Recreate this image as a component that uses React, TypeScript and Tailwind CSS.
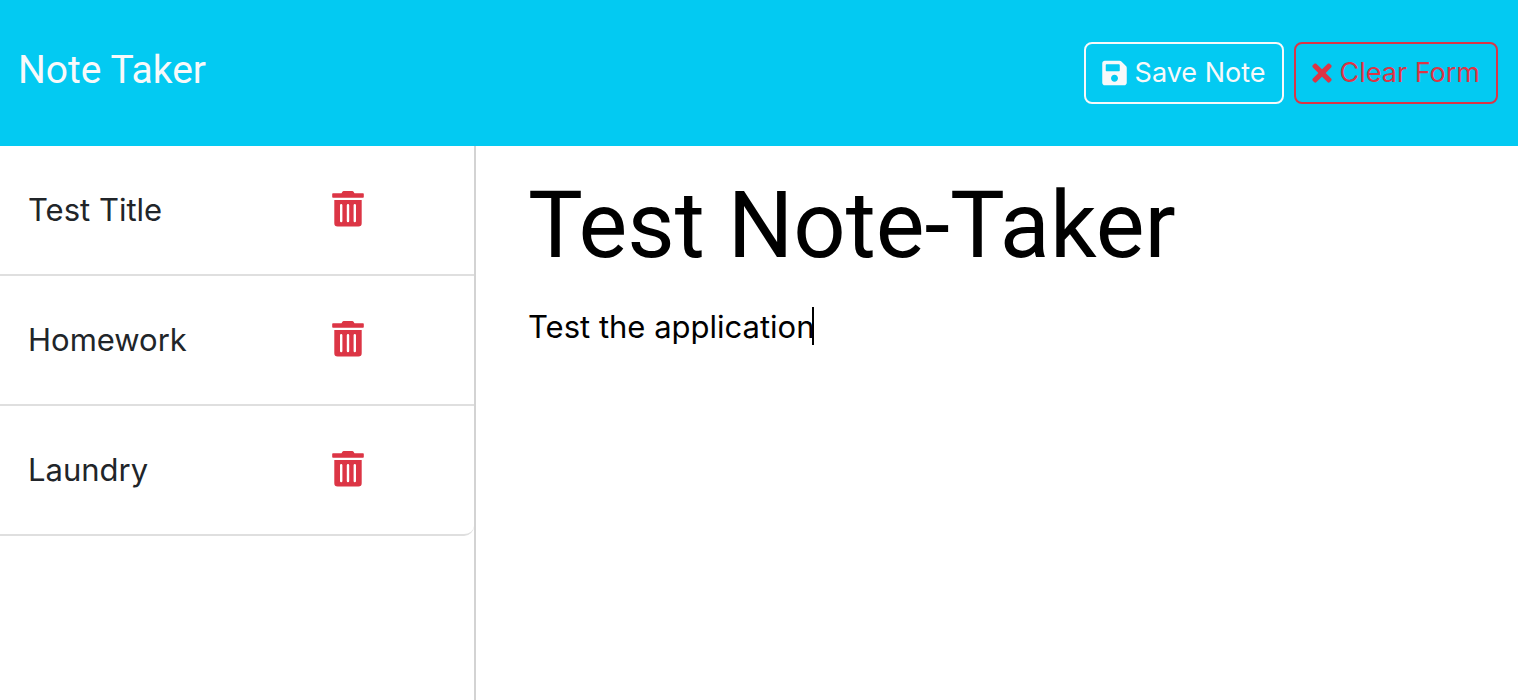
import { useState } from "react";
import { FaSave, FaTimes } from "react-icons/fa";

const notes = ["Test Title", "Homework", "Laundry"];

function TrashIcon() {
  return (
    <svg viewBox="0 0 32 36" className="h-9 w-8" fill="currentColor" aria-hidden="true">
      <path
        fillRule="evenodd"
        d="M1 2.2H9.5L10.4 0.8Q10.9 0 11.8 0H20.2Q21.1 0 21.6 0.8L22.5 2.2H31Q31.8 2.2 31.8 3V5.9Q31.8 6.7 31 6.7H1Q0.2 6.7 0.2 5.9V3Q0.2 2.2 1 2.2ZM2.3 9H29.7V32.3Q29.7 35.6 26.4 35.6H5.6Q2.3 35.6 2.3 32.3ZM9.2 13Q8 13 8 14.2V30Q8 31.2 9.2 31.2Q10.4 31.2 10.4 30V14.2Q10.4 13 9.2 13ZM16 13Q14.8 13 14.8 14.2V30Q14.8 31.2 16 31.2Q17.2 31.2 17.2 30V14.2Q17.2 13 16 13ZM22.8 13Q21.6 13 21.6 14.2V30Q21.6 31.2 22.8 31.2Q24 31.2 24 30V14.2Q24 13 22.8 13Z"
      />
    </svg>
  );
}

export default function App() {
  const [title, setTitle] = useState("Test Note-Taker");
  const [body, setBody] = useState("Test the application");
  const [showCaret, setShowCaret] = useState(true);
  return (
    <div className="flex min-h-screen flex-col bg-white font-['Inter',sans-serif] text-[#212529]">
      <nav className="flex items-center justify-between bg-[#03caf2] py-[42px] pr-5 pl-[18px]">
        <a href="#" className="pb-1.5 font-['Roboto',sans-serif] text-[39px] leading-[54px] text-[#f8f9fa]">Note Taker</a>
        <div className="flex gap-[10px] text-[27px]">
          <button type="button" className="flex h-[62px] items-center gap-2 rounded-lg border-2 border-[#f8f9fa] px-4 text-[#f8f9fa]">
            <FaSave className="h-7 w-[25px]" /> Save Note
          </button>
          <button type="button" className="flex h-[62px] items-center gap-2 rounded-lg border-2 border-[#dc3545] px-4 text-[#dc3545]">
            <FaTimes className="h-7 w-5" /> Clear Form
          </button>
        </div>
      </nav>
      <main className="flex grow">
        <aside className="w-[476px] shrink-0 border-r-2 border-[#d3d3d3]">
          <ul className="overflow-hidden rounded-br-[10px] border-b-2 border-[#dfdfdf]">
            {notes.map((n) => (
              <li key={n} className="flex items-start justify-between border-b-2 border-[#dfdfdf] pt-10 pr-[110px] pb-10 pl-7 last:border-b-0">
                <a href="#" className="text-[31px] leading-[48px]">{n}</a>
                <button type="button" aria-label={"Delete " + n} className="pt-[5px] text-[#dc3545]"><TrashIcon /></button>
              </li>
            ))}
          </ul>
        </aside>
        <section className="flex grow flex-col px-[52px] pt-6">
          <input
            aria-label="Note Title"
            value={title}
            onChange={(e) => setTitle(e.target.value)}
            className="h-[112px] w-full font-['Roboto',sans-serif] text-[92px] text-black outline-none"
          />
          <div className="relative mt-[21px]">
            <textarea
              aria-label="Note Text"
              value={body}
              onChange={(e) => setBody(e.target.value)}
              onFocus={() => setShowCaret(false)}
              className="h-80 w-full resize-none text-[31px] leading-[48px] text-black outline-none"
            />
            {showCaret && <span className="absolute top-1 left-[284px] h-[38px] w-0.5 bg-black" />}
          </div>
        </section>
      </main>
    </div>
  );
}
